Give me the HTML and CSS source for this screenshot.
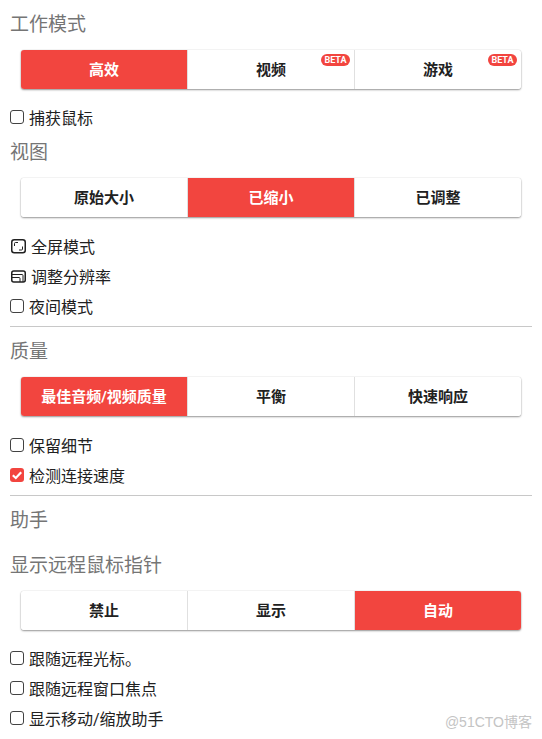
FILE: index.html
```html
<!DOCTYPE html>
<html lang="zh-CN">
<head>
    <meta charset="UTF-8">
    <meta name="viewport" content="width=device-width, initial-scale=1.0">
    <title>工作模式</title>
    <link rel="stylesheet" href="styles.css">
</head>
<body>
    <div class="panel">
        <div class="heading first">工作模式</div>
        <div class="seg-group tight">
            <button class="seg-button active">高效</button>
            <button class="seg-button">视频<span class="beta">BETA</span></button>
            <button class="seg-button">游戏<span class="beta">BETA</span></button>
        </div>
        <label class="row"><span class="check"></span>捕获鼠标</label>

        <div class="heading view">视图</div>
        <div class="seg-group">
            <button class="seg-button">原始大小</button>
            <button class="seg-button active">已缩小</button>
            <button class="seg-button">已调整</button>
        </div>
        <div class="row icon-row">
            <svg class="row-icon" viewBox="0 0 15 15" width="15" height="15" fill="none" stroke="#212121">
                <rect x="0.75" y="0.75" width="13.5" height="13" rx="2.5" stroke-width="1.5"/>
                <path d="M3.5 7V4.5a1 1 0 0 1 1-1H7M11.5 7.5v2.5a1 1 0 0 1-1 1H8" stroke-width="1"/>
            </svg>全屏模式
        </div>
        <div class="row icon-row">
            <svg class="row-icon" viewBox="0 0 15 15" width="15" height="15" fill="none" stroke="#212121">
                <rect x="0.75" y="2" width="13.5" height="11" rx="2" stroke-width="1.5"/>
                <path d="M1 5.5H11a1 1 0 0 1 1 1V13M1 8.5H8a1 1 0 0 1 1 1V13" stroke-width="1"/>
            </svg>调整分辨率
        </div>
        <label class="row"><span class="check"></span>夜间模式</label>
        <hr class="divider">

        <div class="heading quality">质量</div>
        <div class="seg-group">
            <button class="seg-button active">最佳音频/视频质量</button>
            <button class="seg-button">平衡</button>
            <button class="seg-button">快速响应</button>
        </div>
        <label class="row"><span class="check"></span>保留细节</label>
        <label class="row"><span class="check checked">
            <svg viewBox="0 0 14 14" width="14" height="14" fill="none" stroke="#fff" stroke-width="2.2"><path d="M2.8 7.2L5.8 10L11.2 4.2"/></svg>
        </span>检测连接速度</label>
        <hr class="divider">

        <div class="heading helper">助手</div>
        <div class="heading pointer">显示远程鼠标指针</div>
        <div class="seg-group tight">
            <button class="seg-button">禁止</button>
            <button class="seg-button">显示</button>
            <button class="seg-button active">自动</button>
        </div>
        <label class="row"><span class="check"></span>跟随远程光标。</label>
        <label class="row"><span class="check"></span>跟随远程窗口焦点</label>
        <label class="row"><span class="check"></span>显示移动/缩放助手</label>
    </div>
    <div class="watermark">@51CTO博客</div>
</body>
</html>
```

FILE: styles.css
```css
/* General */
body {
    margin: 0;
    font-family: Roboto, "Noto Sans CJK SC", sans-serif;
    background-color: #FFFFFF;
    color: #212121;
    overflow: hidden;
}

.panel {
    padding: 0 10px;
}

.heading {
    font-size: 19px;
    line-height: 28px;
    color: #757575;
}

.heading.first {
    margin-top: 11px;
}

.heading.view {
    margin-top: 7px;
}

.heading.quality {
    margin-top: 11px;
}

.heading.helper {
    margin-top: 11px;
}

.heading.pointer {
    margin-top: 17px;
}

/* Segmented buttons */
.seg-group {
    display: flex;
    height: 39px;
    margin: 11px 11px 14px;
    border-radius: 3px;
    box-shadow: 0 1px 2px rgba(0, 0, 0, 0.4), 0 0 1px rgba(0, 0, 0, 0.3);
}

.seg-group.tight {
    margin-bottom: 13px;
}

.seg-button {
    position: relative;
    flex: 1;
    padding: 0 0 2px;
    border: none;
    border-right: 1px solid #E0E0E0;
    background-color: #FFFFFF;
    color: #212121;
    font-family: inherit;
    font-size: 15px;
    font-weight: 700;
}

.seg-button:first-child {
    border-radius: 3px 0 0 3px;
}

.seg-button:last-child {
    border-right: none;
    border-radius: 0 3px 3px 0;
}

.seg-button.active {
    background-color: #F2453F;
    color: #FFFFFF;
}

.beta {
    position: absolute;
    top: 4px;
    right: 4px;
    width: 29px;
    height: 12px;
    border-radius: 6px;
    background-color: #F2453F;
    color: #FFFFFF;
    font-size: 9px;
    line-height: 12px;
    text-align: center;
}

/* Option rows */
.row {
    display: flex;
    align-items: center;
    height: 30px;
    font-size: 16px;
}

.check {
    display: flex;
    box-sizing: border-box;
    width: 14px;
    height: 14px;
    margin-right: 5px;
    border: 1px solid #424242;
    border-radius: 3px;
}

.check.checked {
    border: none;
    background-color: #F2453F;
}

.row-icon {
    margin: 0 5px 0 1px;
}

.divider {
    height: 1px;
    margin: 5px 0 0;
    border: none;
    background-color: #C8C8C8;
}

.watermark {
    position: absolute;
    top: 711px;
    right: 10px;
    color: #C4C4C4;
    font-family: "Liberation Sans", "Noto Sans CJK SC", sans-serif;
    font-size: 14px;
}
```
